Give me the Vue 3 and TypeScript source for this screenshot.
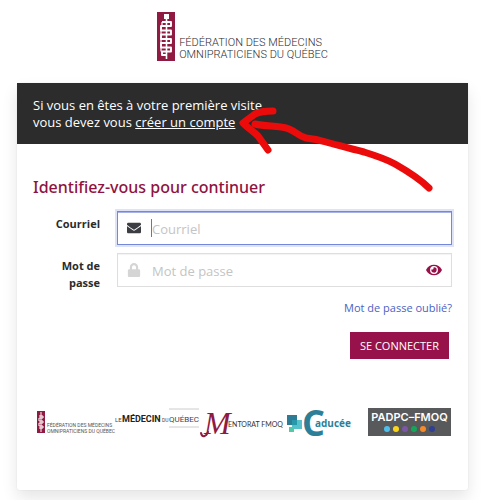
<script setup lang="ts">
import { ref } from 'vue'

const email = ref('')
const password = ref('')
const showPassword = ref(false)
const dots: string[] = ['#4fc0ee', '#fbd51c', '#7c57a5', '#13a65b', '#f58a2b', '#303f91']
</script>

<template>
  <div class="page">
    <header class="brand">
      <svg class="brand-mark" viewBox="0 0 18 49" aria-hidden="true">
        <rect width="18" height="49" fill="#8f1a42" />
        <rect x="7" y="2" width="5" height="5" fill="#fff" />
        <path d="M9.500 7V47" fill="none" stroke="#fff" stroke-width="1.600" />
        <path d="M5 10H14V14H4V18.500H14V22.500H4V27H14V31H4V35.500H14V39.500H5V43H9.500" fill="none" stroke="#fff" stroke-width="1.900" stroke-linejoin="round" />
        <path d="M5 10V14M4 18.500V22.500M4 27V31M4 35.500V39.500" fill="none" stroke="#fff" stroke-width="1.200" />
      </svg>
      <div class="brand-name">FÉDÉRATION DES MÉDECINS<br />OMNIPRATICIENS DU QUÉBEC</div>
    </header>

    <main class="card">
      <div class="notice">
        <p>Si vous en êtes à votre première visite,<br />vous devez vous <a href="#">créer un compte</a></p>
        <svg class="arrow" viewBox="0 0 194 88" aria-hidden="true">
          <path d="M33 7C27 7 21 7 15 10L3 19C9 25 14 28 18 32L28 46" />
          <path d="M15 20C27 23 39 21 49 25C57 28 58 32 66 34C75 35 79 36 86 38C101 42 111 45 124 48C137 52 146 55 155 60C169 68 180 75 189 84" />
        </svg>
      </div>

      <form class="form" @submit.prevent>
        <h1>Identifiez-vous pour continuer</h1>
        <div class="row">
          <label for="email">Courriel</label>
          <div class="field active">
            <svg class="icon" viewBox="0 0 512 512" aria-hidden="true">
              <path fill="#3c3d42" d="M502 191c4-3 10 0 10 5v204c0 27-21 48-48 48H48c-27 0-48-21-48-48V196c0-5 6-8 10-5 22 17 52 40 155 114 21 15 57 48 91 48 35 0 71-33 92-48 103-74 132-97 154-114zM256 320c23 0 57-30 74-42 134-97 144-105 175-129 6-5 7-11 7-19v-18c0-27-21-48-48-48H48c-27 0-48 21-48 48v18c0 8 1 14 7 19 31 24 41 32 175 129 17 12 51 42 74 42z" />
            </svg>
            <span class="caret"></span>
            <input id="email" v-model="email" type="email" placeholder="Courriel" />
          </div>
        </div>
        <div class="row">
          <label for="password">Mot de passe</label>
          <div class="field">
            <svg class="icon" viewBox="0 0 512 512" aria-hidden="true">
              <path fill="#d5d5d5" d="M432 224h-24v-72C408 68 340 0 256 0S104 68 104 152v72H80c-27 0-48 21-48 48v192c0 27 21 48 48 48h352c27 0 48-21 48-48V272c0-27-21-48-48-48zm-104 0H184v-72c0-40 32-72 72-72s72 32 72 72v72z" />
            </svg>
            <span class="caret off"></span>
            <input id="password" v-model="password" :type="showPassword ? 'text' : 'password'" placeholder="Mot de passe" />
            <button class="eye" type="button" aria-label="Afficher le mot de passe" @click="showPassword = !showPassword">
              <svg viewBox="0 0 576 512" aria-hidden="true">
                <path fill="#97124a" d="M572 241C518 135 411 64 288 64S58 135 4 241a32 32 0 0 0 0 30c54 106 161 177 284 177s230-71 284-177a32 32 0 0 0 0-30zM288 400a144 144 0 1 1 144-144 144 144 0 0 1-144 144zm0-240a95 95 0 0 0-25 4 48 48 0 0 1-67 67 96 96 0 1 0 92-71z" />
              </svg>
            </button>
          </div>
        </div>
        <a class="forgot" href="#">Mot de passe oublié?</a>
        <button class="submit" type="submit">SE CONNECTER</button>
      </form>

      <footer class="partners">
        <svg class="p-fmoq" viewBox="0 0 77 34" role="img" aria-label="Fédération des médecins omnipraticiens du Québec">
          <rect y="3" width="8" height="22" fill="#8f1a42" />
          <path d="M4 4V24M2 8H6V10H2V13H6V15H2V18H6V20H2" stroke="#fff" fill="none" />
          <g font-family="Roboto, sans-serif" font-size="5" fill="#555">
            <text x="10" y="19">FÉDÉRATION DES MÉDECINS</text>
            <text x="10" y="25">OMNIPRATICIENS DU QUÉBEC</text>
          </g>
        </svg>
        <svg class="p-mdq" viewBox="0 0 86 34" role="img" aria-label="Le Médecin du Québec">
          <path d="M54 1H84M54 19H84" stroke="#ccc" />
          <g font-family="Roboto, sans-serif" fill="#444">
            <text x="0" y="14" font-size="6">LE</text>
            <text x="7" y="14" font-size="9" font-weight="700" fill="#222">MÉDECIN</text>
            <text x="47" y="14" font-size="5">DU</text>
            <text x="54" y="14" font-size="8">QUÉBEC</text>
          </g>
        </svg>
        <svg class="p-mentorat" viewBox="0 0 85 34" role="img" aria-label="Mentorat FMOQ">
          <text x="3" y="26" font-family="'Liberation Serif', serif" font-style="italic" font-size="32" fill="#8f1a42">M</text>
          <path d="M0 25C1 30 5 29 7 24" fill="none" stroke="#8f1a42" stroke-width="2" stroke-linecap="round" />
          <text x="27" y="19" font-family="Lato, sans-serif" font-size="7" fill="#333">ENTORAT FMOQ</text>
        </svg>
        <svg class="p-caducee" viewBox="0 0 66 34" role="img" aria-label="Caducée">
          <rect y="7" width="10" height="10" fill="#2d7b95" />
          <rect x="5" y="12" width="10" height="9" fill="#55c1cb" />
          <rect x="5" y="12" width="5" height="5" fill="#2798a9" />
          <rect x="2" y="19" width="5" height="5" fill="#55c9a5" />
          <g font-family="'Open Sans', sans-serif" font-weight="700" fill="#2d7f98">
            <text x="15" y="28" font-size="36">C</text>
            <text x="28" y="19" font-size="10" stroke="#fff" stroke-width="2" paint-order="stroke">aducée</text>
          </g>
        </svg>
        <div class="p-padpc">
          <span>PADPC–FMOQ</span>
          <div class="dots"><i v-for="color in dots" :key="color" :style="{ background: color }"></i></div>
        </div>
      </footer>
    </main>
  </div>
</template>

<style>
body {
  background: #fff;
}
</style>

<style scoped>
* {
  box-sizing: border-box;
}
.page {
  padding: 12px 13px 10px 17px;
  font-family: 'Open Sans', 'Noto Sans', sans-serif;
  font-size: 13px;
  color: #2b2b2b;
}
.brand {
  display: flex;
  justify-content: center;
  align-items: flex-end;
  gap: 4px;
  height: 49px;
  margin-bottom: 22px;
}
.brand-mark {
  width: 18px;
  height: 49px;
}
.brand-name {
  font-family: Roboto, sans-serif;
  font-size: 11px;
  font-weight: 300;
  line-height: 12px;
  color: #2c2d30;
  white-space: nowrap;
}
.card {
  border-radius: 3px;
  background: #fff;
  box-shadow: 0 8px 16px rgba(10, 10, 10, 0.1), 0 0 0 1px rgba(10, 10, 10, 0.02);
}
.notice {
  position: relative;
  padding: 14px 16px 13px;
  background: #2c2c2c;
  color: #fff;
}
.notice p {
  margin: 0;
  line-height: 17px;
}
.notice a {
  color: #fff;
  text-decoration: underline;
}
.arrow {
  position: absolute;
  left: 223px;
  top: 21px;
  width: 194px;
  height: 88px;
  overflow: visible;
  fill: none;
  stroke: #ec0b0b;
  stroke-width: 7;
  stroke-linecap: round;
  stroke-linejoin: round;
}
.form {
  display: flex;
  flex-direction: column;
  padding: 32px 16px 0;
}
h1 {
  margin: 0 0 13px;
  font-family: 'Noto Sans', 'Open Sans', sans-serif;
  font-size: 16px;
  line-height: 22px;
  font-weight: 500;
  color: #8f1240;
}
.row {
  display: grid;
  grid-template-columns: 67px 1fr;
  column-gap: 17px;
  margin-bottom: 8px;
}
label {
  padding-top: 4px;
  font-size: 11px;
  line-height: 17px;
  font-weight: 700;
  text-align: right;
}
.field {
  display: flex;
  align-items: center;
  height: 34px;
  padding: 0 9px;
  border: 1px solid #dedede;
  box-shadow: inset 0 1px 1px rgba(10, 10, 10, 0.05);
}
.active {
  border-color: #7488da;
  box-shadow: 0 0 0 2px #dfe3f7, inset 0 1px 0 #a7b3e8;
}
.icon {
  width: 14px;
  height: 14px;
  margin-right: 10px;
}
.caret {
  width: 1px;
  height: 18px;
  background: #777;
}
.off {
  background: transparent;
}
input {
  flex: 1;
  min-width: 0;
  height: 30px;
  padding: 2px 0 0;
  border: 0;
  outline: 0;
  background: transparent;
  font: inherit;
}
input::placeholder {
  color: #c4c4c4;
  opacity: 1;
}
.eye {
  display: flex;
  padding: 0;
  border: 0;
  background: none;
}
.eye svg {
  width: 16px;
  height: 14px;
}
.forgot {
  align-self: flex-end;
  font-size: 11px;
  line-height: 17px;
  color: #4a62c4;
  text-decoration: none;
}
.submit {
  align-self: flex-end;
  height: 27px;
  margin: 16px 3px 0 0;
  padding: 0 10px;
  border: 0;
  background: #97124a;
  color: #fff;
  font-family: inherit;
  font-size: 11px;
}
.partners {
  display: flex;
  justify-content: space-between;
  padding: 49px 17px 48px 20px;
}
.partners svg {
  height: 34px;
  overflow: visible;
}
.p-fmoq {
  width: 77px;
}
.p-mdq {
  width: 86px;
}
.p-mentorat {
  width: 85px;
}
.p-caducee {
  width: 66px;
  margin-right: 15px;
}
.p-padpc {
  display: flex;
  flex-direction: column;
  align-items: center;
  gap: 2px;
  width: 83px;
  height: 28px;
  padding-top: 3px;
  background: #58595b;
  color: #fff;
  font-family: Inter, sans-serif;
  font-size: 11px;
  line-height: 13px;
  font-weight: 600;
}
.dots {
  display: flex;
  gap: 3px;
}
.dots i {
  width: 6px;
  height: 6px;
  border-radius: 50%;
}
</style>
